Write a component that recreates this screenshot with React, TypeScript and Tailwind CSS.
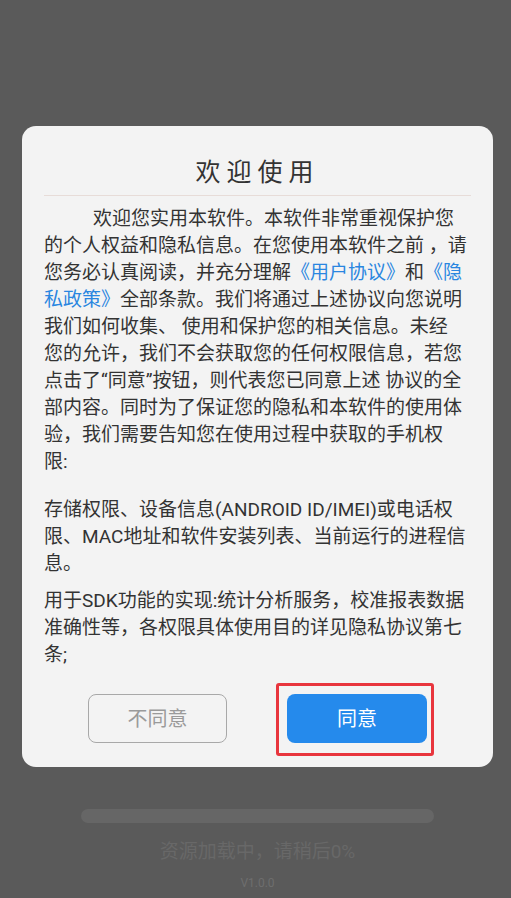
import React from 'react';

const Link = ({ children }: { children: React.ReactNode }) => (
  <span className="text-[#2a86e0]">{children}</span>
);

export default function App() {
  return (
    <div
      className="min-h-[898px] w-full bg-[#5a5a5a] flex flex-col items-center overflow-hidden pl-[4px]"
      style={{ fontFamily: 'Roboto, "Noto Sans CJK SC", sans-serif' }}
    >
      {/* dialog */}
      <div className="mt-[126px] w-[471px] rounded-[14px] bg-[#f3f3f3] px-[22px] pt-[31px] pb-[24px]">
        <h1 className="text-center text-[25px] leading-[32px] tracking-[6px] text-[#333] font-normal">
          欢迎使用
        </h1>
        <div className="mt-[6px] h-px bg-[#e7dcd8]" />

        <div className="mt-[9px] text-[19px] leading-[27px] text-[#333] whitespace-nowrap">
          <p className="mb-[21px]">
            <span className="pl-[49px]">欢迎您实用本软件。本软件非常重视保护您</span>
            <br />
            的个人权益和隐私信息。在您使用本软件之前 ，请
            <br />
            您务必认真阅读，并充分理解<Link>《用户协议》</Link>和<Link>《隐</Link>
            <br />
            <Link>私政策》</Link>全部条款。我们将通过上述协议向您说明
            <br />
            我们如何收集、 使用和保护您的相关信息。未经
            <br />
            您的允许，我们不会获取您的任何权限信息，若您
            <br />
            点击了“同意”按钮，则代表您已同意上述 协议的全
            <br />
            部内容。同时为了保证您的隐私和本软件的使用体
            <br />
            验，我们需要告知您在使用过程中获取的手机权
            <br />
            限:
          </p>
          <p className="mb-[10px]">
            存储权限、设备信息(ANDROID ID/IMEI)或电话权
            <br />
            限、MAC地址和软件安装列表、当前运行的进程信
            <br />
            息。
          </p>
          <p>
            用于SDK功能的实现:统计分析服务，校准报表数据
            <br />
            准确性等，各权限具体使用目的详见隐私协议第七
            <br />
            条;
          </p>
        </div>

        <div className="mt-[26px] flex justify-center gap-[60px]">
          <button className="h-[49px] w-[139px] rounded-[8px] border-[1.5px] border-[#a8a8a8] text-[20px] text-[#9a9a9a]">
            不同意
          </button>
          <div className="relative">
            <button className="h-[49px] w-[140px] rounded-[8px] bg-[#258aec] text-[20px] text-white">
              同意
            </button>
            <span className="pointer-events-none absolute -left-[11px] -top-[11px] -right-[7px] -bottom-[13px] rounded-[3px] border-[3px] border-[#e8353d]" />
          </div>
        </div>
      </div>

      {/* loading area under the mask */}
      <div className="mt-[42px] h-[14px] w-[353px] rounded-full bg-[#666]" />
      <p className="mt-[16px] text-[19px] leading-[26px] text-[#686868]">资源加载中，请稍后0%</p>
      <p className="mt-[10px] text-[12px] leading-[16px] text-[#6e6e6e]">V1.0.0</p>
    </div>
  );
}
